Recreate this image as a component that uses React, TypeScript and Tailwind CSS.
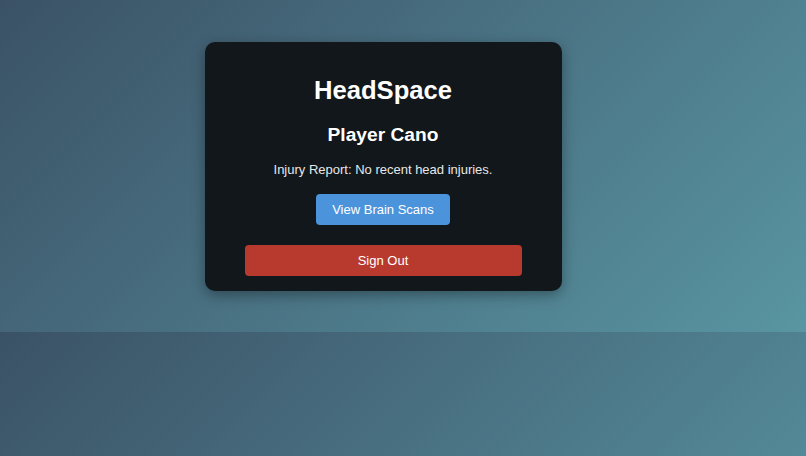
export default function App() {
  return (
    <div
      className="h-[456px] w-full overflow-hidden bg-[linear-gradient(135deg,#3b5266,#5995a2)] bg-size-[100%_332px] bg-repeat"
      style={{ fontFamily: '"Liberation Sans", Arial, sans-serif' }}
    >
      <div className="flex justify-center pr-10 pt-[42px]">
        <div className="flex w-[357px] flex-col items-center rounded-[10px] bg-[#11171a] px-10 pt-[34px] pb-[15px] text-center text-white shadow-[0_4px_14px_rgba(0,0,0,0.35)]">
          <h1 className="text-[25.6px] font-bold leading-[29px]">HeadSpace</h1>
          <h2 className="mt-[19px] text-[19.2px] font-bold leading-[22px]">Player Cano</h2>
          <p className="mt-[16px] text-[13px] leading-[15px] text-[#e8e8e8]">
            Injury Report: No recent head injuries.
          </p>
          <button className="mt-[17px] rounded-[4px] bg-[#4b94dc] px-4 py-2 text-[13px] leading-[15px] text-white">
            View Brain Scans
          </button>
          <button className="mt-[20px] w-full rounded-[4px] bg-[#b83a2f] py-2 text-[13px] leading-[15px] text-white">
            Sign Out
          </button>
        </div>
      </div>
    </div>
  )
}
